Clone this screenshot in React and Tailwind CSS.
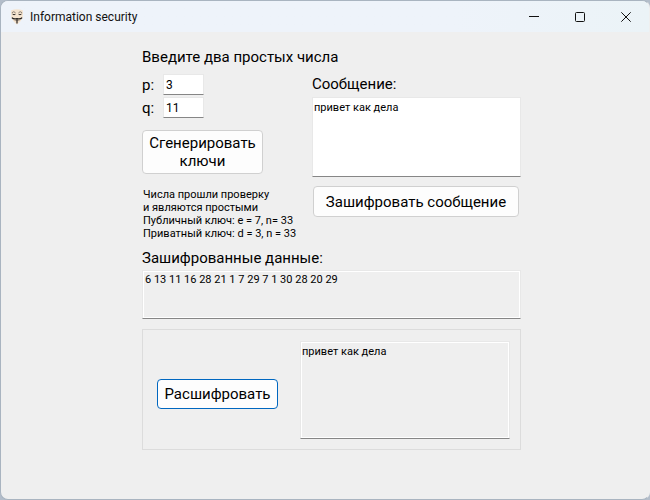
import React from "react";

const label = "block font-[Roboto,sans-serif] text-[15px] leading-[20px]";
const button =
  "rounded-[4px] border bg-[#fdfdfd] font-[Roboto,sans-serif] text-[15px] leading-[18px] text-black";
const field =
  "block w-full resize-none overflow-hidden border border-[#e8e8e8] border-b-[#868686] text-black outline-none";
const message = "px-px pt-[3px] font-[Roboto,sans-serif] text-[11px] leading-[13px]";

function Mask() {
  return (
    <svg className="h-4 w-4" viewBox="0 0 16 16" aria-hidden="true">
      <path d="M2.2 1.2Q8-0.6 13.8 1.2L13.8 8Q12.5 12 8 15.8Q3.5 12 2.2 8Z" fill="#f5e4cf" />
      <path d="M2.8 3.8Q4.5 1.9 6.4 3.5M9.6 3.5Q11.5 1.9 13.2 3.8" fill="none" stroke="#7a7067" strokeWidth="0.9" />
      <path d="M3.5 5.1Q5 6.4 6.5 5.2M9.5 5.2Q11 6.4 12.5 5.1" fill="none" stroke="#35302c" strokeWidth="1" />
      <path d="M2.9 8.6Q4.5 10.6 8 9.6Q11.5 10.6 13.1 8.6" fill="none" stroke="#25211e" strokeWidth="1.2" />
      <path d="M5.5 11.4H10.5" stroke="#8f8174" strokeWidth="0.7" />
      <path d="M8 10.3V14.5" stroke="#25211e" strokeWidth="1.2" />
    </svg>
  );
}

function TitleBar() {
  return (
    <header className="flex h-[31px] items-center bg-linear-to-r from-[#eef3fa] from-70% to-[#ebf3f7] pl-[8px]">
      <Mask />
      <h1 className="ml-[5px] flex-1 font-[Roboto,sans-serif] text-[12px] leading-[16px] text-[#111]">
        Information security
      </h1>
      <button className="flex h-full w-[46px] items-center justify-center" aria-label="Minimize">
        <svg className="h-[10px] w-[10px]" viewBox="0 0 10 10" stroke="#111" fill="none">
          <path d="M0 4.5H10" />
        </svg>
      </button>
      <button className="flex h-full w-[46px] items-center justify-center" aria-label="Maximize">
        <svg className="h-[10px] w-[10px]" viewBox="0 0 10 10" stroke="#111" fill="none">
          <rect x="0.5" y="0.5" width="9" height="9" rx="1" />
        </svg>
      </button>
      <button className="flex h-full w-[46px] items-center justify-center" aria-label="Close">
        <svg className="h-[10px] w-[10px]" viewBox="0 0 10 10" stroke="#111" fill="none">
          <path d="M0.3 0.3L9.7 9.7M9.7 0.3L0.3 9.7" />
        </svg>
      </button>
    </header>
  );
}

function PrimeInput({ name, value }) {
  return (
    <div className="flex items-center">
      <label htmlFor={name} className={`${label} w-[21px]`}>
        {name}:
      </label>
      <input
        id={name}
        defaultValue={value}
        className="h-[21px] w-[41px] border border-[#e8e8e8] border-b-[#868686] bg-white px-[2px] font-[Roboto,sans-serif] text-[12px] leading-[16px] text-black outline-none"
      />
    </div>
  );
}

export default function App() {
  return (
    <div className="min-h-screen bg-[#b3bdca]">
      <div className="flex min-h-screen flex-col overflow-hidden rounded-[8px] border border-[#a9b4c0] border-r-[#efefef] bg-[#efefef] text-black">
        <TitleBar />
        <main className="flex-1 pt-[15px] pr-[128px] pb-4 pl-[141px]">
          <h2 className={label}>Введите два простых числа</h2>
          <div className="flex pt-[7px]">
            <section className="w-[170px] shrink-0">
              <div className="flex flex-col gap-[2px]">
                <PrimeInput name="p" value="3" />
                <PrimeInput name="q" value="11" />
              </div>
              <button className={`${button} mt-[12px] h-[44px] w-[121px] border-[#d0d0d0]`}>
                Сгенерировать ключи
              </button>
              <p className="mt-[14px] whitespace-nowrap pl-px font-[Roboto,sans-serif] text-[11px] leading-[13px]">
                Числа прошли проверку
                <br />
                и являются простыми
                <br />
                Публичный ключ: e = 7, n= 33
                <br />
                Приватный ключ: d = 3, n = 33
              </p>
            </section>
            <section className="min-w-0 flex-1">
              <label htmlFor="message" className={label}>
                Сообщение:
              </label>
              <textarea
                id="message"
                defaultValue="привет как дела"
                className={`${field} ${message} mt-[3px] h-[80px] bg-white`}
              />
              <button className={`${button} mt-[9px] ml-px h-[31px] w-[206px] border-[#d0d0d0]`}>
                Зашифровать сообщение
              </button>
            </section>
          </div>
          <label htmlFor="encrypted" className={`${label} mt-[8px]`}>
            Зашифрованные данные:
          </label>
          <textarea
            id="encrypted"
            readOnly
            defaultValue="6 13 11 16 28 21 1 7 29 7 1 30 28 20 29"
            className={`${field} mt-[2px] h-[49px] bg-[#efefef] px-[2px] pt-[2px] font-[Roboto,sans-serif] text-[11px] leading-[14px] inset-ring inset-ring-white`}
          />
          <section className="mt-[10px] flex h-[121px] items-center border border-[#dcdcdc] pr-[10px] pl-[14px]">
            <button className={`${button} mt-[9px] h-[30px] w-[121px] border-[#0067c0]`}>
              Расшифровать
            </button>
            <textarea
              aria-label="Расшифрованное сообщение"
              readOnly
              defaultValue="привет как дела"
              className={`${field} ${message} ml-[22px] h-[98px] min-w-0 flex-1 bg-[#efefef] inset-ring inset-ring-white`}
            />
          </section>
        </main>
      </div>
    </div>
  );
}
